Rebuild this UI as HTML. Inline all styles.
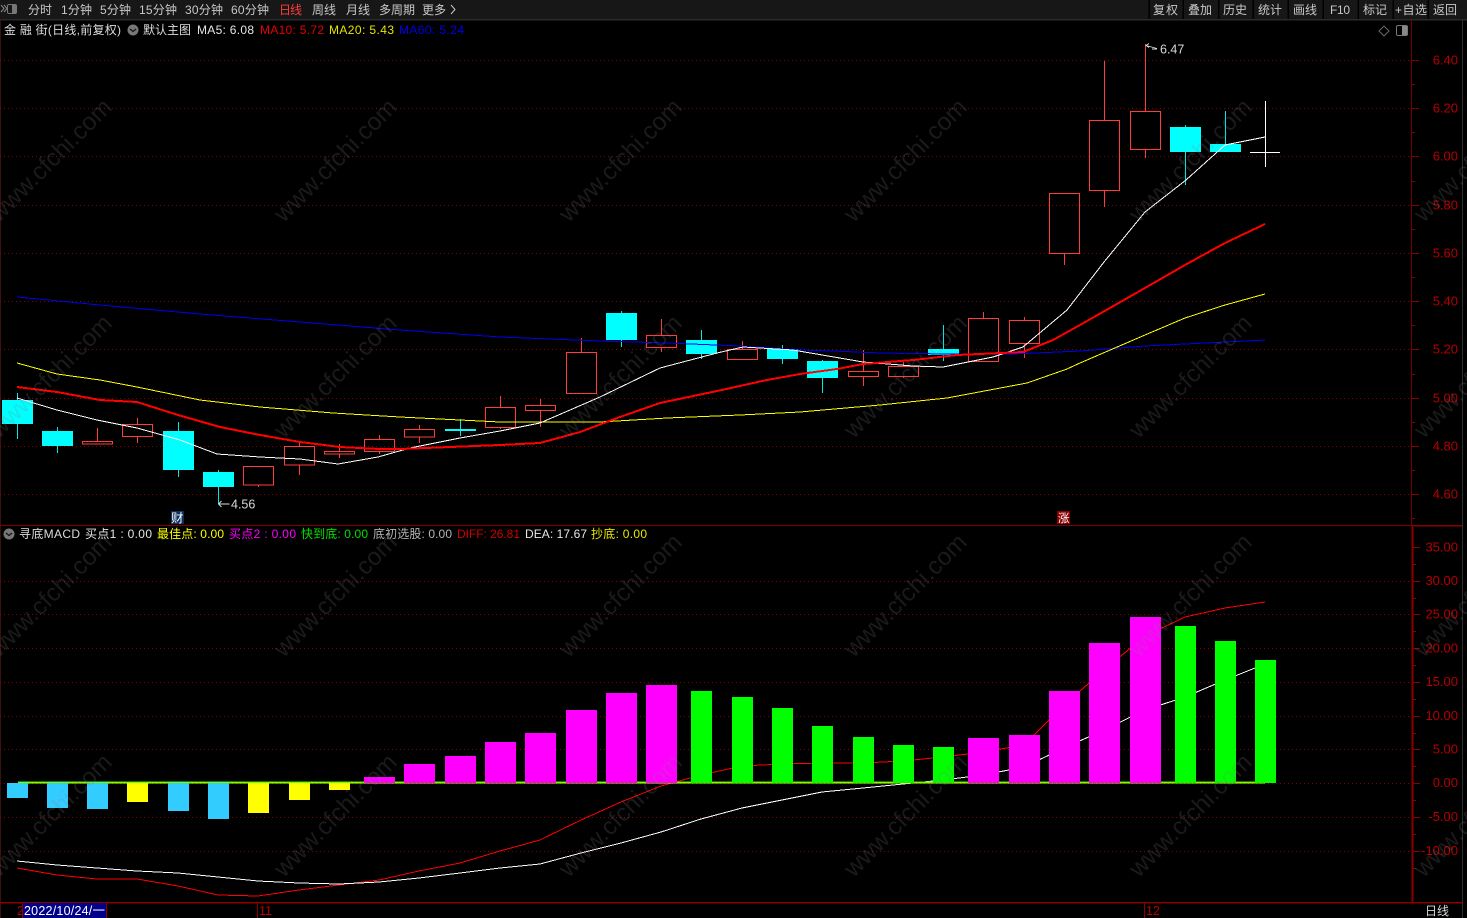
<!DOCTYPE html>
<html lang="zh"><head><meta charset="utf-8"><title>金融街 日线</title>
<style>
html,body{margin:0;padding:0;background:#000;width:1467px;height:918px;overflow:hidden}
svg{display:block;font-family:"Liberation Sans","Noto Sans CJK SC",sans-serif}
.c rect,.c line,polyline,.g line,.cr{shape-rendering:crispEdges}
.tb text{font-size:12px;fill:#c8c8c8}
.h text{font-size:12px}
.ax text{font-size:13px;fill:#b40000;text-anchor:end}
.wm text{font-size:24.5px;fill:#808080;opacity:.2;text-anchor:middle}
</style></head><body>
<svg width="1467" height="918" viewBox="0 0 1467 918" xmlns="http://www.w3.org/2000/svg">
<rect width="1467" height="918" fill="#000"/>
<!-- toolbar -->
<rect width="1467" height="19" fill="#171717"/>
<rect x="0" y="19" width="1467" height="1.5" fill="#2a2a2a"/>
<path d="M1 5l3 3.5-3 3.5M4 5l3 3.5-3 3.5" fill="none" stroke="#888" stroke-width="1"/>
<rect x="7.5" y="4.5" width="9" height="9" rx="1.5" fill="none" stroke="#777"/><rect x="12" y="5" width="4" height="8" fill="#777"/>
<g class="tb">
<text x="28" y="14" textLength="24">分时</text>
<text x="61" y="14" textLength="31">1分钟</text>
<text x="100" y="14" textLength="31">5分钟</text>
<text x="139" y="14" textLength="38">15分钟</text>
<text x="185" y="14" textLength="38">30分钟</text>
<text x="231" y="14" textLength="38">60分钟</text>
<text x="279" y="14" textLength="23" style="fill:#ff3c3c">日线</text>
<text x="312" y="14" textLength="24">周线</text>
<text x="346" y="14" textLength="24">月线</text>
<text x="379" y="14" textLength="36">多周期</text>
<text x="422" y="14" textLength="24">更多</text>
<path d="M451 5l4 4.5-4 4.5" fill="none" stroke="#c8c8c8"/>
<text x="1153" y="14" textLength="25">复权</text>
<text x="1188" y="14" textLength="24">叠加</text>
<text x="1223" y="14" textLength="24">历史</text>
<text x="1258" y="14" textLength="24">统计</text>
<text x="1293" y="14" textLength="24">画线</text>
<text x="1330" y="14" textLength="20">F10</text>
<text x="1363" y="14" textLength="24">标记</text>
<text x="1395" y="14" textLength="32">+自选</text>
<text x="1433" y="14" textLength="24">返回</text>
</g>
<g class="g" stroke="#000" stroke-width="1.5"><line x1="1149" y1="0" x2="1149" y2="19"/><line x1="1183" y1="0" x2="1183" y2="19"/><line x1="1218.5" y1="0" x2="1218.5" y2="19"/><line x1="1253" y1="0" x2="1253" y2="19"/><line x1="1288" y1="0" x2="1288" y2="19"/><line x1="1323" y1="0" x2="1323" y2="19"/><line x1="1358" y1="0" x2="1358" y2="19"/><line x1="1393" y1="0" x2="1393" y2="19"/><line x1="1428" y1="0" x2="1428" y2="19"/></g>
<!-- frame -->
<g class="g">
<line x1="0.5" y1="20" x2="0.5" y2="918" stroke="#3a1010"/>
<line x1="1411.5" y1="20" x2="1411.5" y2="525" stroke="#700000"/>
<line x1="0" y1="525.5" x2="1412" y2="525.5" stroke="#800000"/>
<line x1="1462.5" y1="20" x2="1462.5" y2="918" stroke="#2e2e2e"/>
</g>
<rect class="cr" x="1412" y="525" width="50" height="1.6" fill="#8a0000"/>
<rect class="cr" x="1411.5" y="525" width="2" height="377" fill="#8a0000"/>
<rect class="cr" x="0" y="902" width="1462" height="1.4" fill="#8a0000"/>
<!-- dotted grids -->
<g stroke="#8c0000" stroke-dasharray="1 3" stroke-width="1">
<path d="M0 60.5H1411M0 108.5H1411M0 156.5H1411M0 205.5H1411M0 253.5H1411M0 301.5H1411M0 349.5H1411M0 398.5H1411M0 446.5H1411M0 494.5H1411" fill="none"/>
<path d="M0 581.5H1411M0 614.5H1411M0 648.5H1411M0 682.5H1411M0 716.5H1411M0 749.5H1411M0 783.5H1411M0 817.5H1411M0 851.5H1411" fill="none"/>
</g>
<!-- axis ticks -->
<path class="cr" stroke="#8a0000" fill="none" d="M1412 60.5h7M1412 84.5h3M1412 108.5h7M1412 132.5h3M1412 156.5h7M1412 181.5h3M1412 205.5h7M1412 229.5h3M1412 253.5h7M1412 277.5h3M1412 301.5h7M1412 325.5h3M1412 349.5h7M1412 374.5h3M1412 398.5h7M1412 422.5h3M1412 446.5h7M1412 470.5h3M1412 494.5h7M1412 518.5h3M1413 547.5h7M1413 564.5h3M1413 581.5h7M1413 598.5h3M1413 614.5h7M1413 631.5h3M1413 648.5h7M1413 665.5h3M1413 682.5h7M1413 699.5h3M1413 716.5h7M1413 733.5h3M1413 749.5h7M1413 766.5h3M1413 783.5h7M1413 800.5h3M1413 817.5h7M1413 834.5h3M1413 851.5h7M1413 868.5h3"/>
<g class="ax">
<text x="1458" y="64.5">6.40</text><text x="1458" y="112.5">6.20</text><text x="1458" y="160.5">6.00</text><text x="1458" y="209.5">5.80</text><text x="1458" y="257.5">5.60</text><text x="1458" y="305.5">5.40</text><text x="1458" y="353.5">5.20</text><text x="1458" y="402.5">5.00</text><text x="1458" y="450.5">4.80</text><text x="1458" y="498.5">4.60</text>
<text x="1458" y="551.5">35.00</text><text x="1458" y="585">30.00</text><text x="1458" y="618.5">25.00</text><text x="1458" y="652.5">20.00</text><text x="1458" y="686">15.00</text><text x="1458" y="720">10.00</text><text x="1458" y="753.5">5.00</text><text x="1458" y="787">0.00</text><text x="1458" y="821">-5.00</text><text x="1458" y="855">-10.00</text>
</g>
<!-- candles -->
<g class="c">
<g stroke="#ff3c3c" fill="none">
<path class="cr" d="M97.5 428V441M137.5 418V424M137.5 436V443M258.5 485V487M299.5 441V446M299.5 465V475M339.5 444V451M339.5 454V458M379.5 435V439M379.5 451V454M419.5 425V429M419.5 437V443M500.5 396V407M500.5 427V429M540.5 399V405M540.5 411V427M581.5 338V352M661.5 319V335M661.5 347V352M742.5 341V349M863.5 350V371M863.5 376V386M903.5 362V366M903.5 376V378M983.5 312V318M1024.5 317V320M1024.5 343V358M1064.5 253V265M1104.5 61V121M1104.5 190V207M1145.5 44V111M1145.5 150V158" shape-rendering="crispEdges"/>
<rect x="82.5" y="441.5" width="30" height="2.5"/><rect x="122.5" y="424.5" width="30" height="12"/><rect x="243.5" y="466.5" width="30" height="18.5"/><rect x="284.5" y="446.5" width="30" height="18.5"/><rect x="324.5" y="451.5" width="30" height="2.5"/><rect x="364.5" y="439.5" width="30" height="12"/><rect x="404.5" y="429.5" width="30" height="7.5"/><rect x="485.5" y="407.5" width="30" height="20"/><rect x="525.5" y="405.5" width="30" height="5"/><rect x="566.5" y="352.5" width="30" height="41"/><rect x="646.5" y="335.5" width="30" height="12"/><rect x="727.5" y="349.5" width="30" height="10"/><rect x="848.5" y="371.5" width="30" height="5"/><rect x="888.5" y="366.5" width="30" height="10"/><rect x="968.5" y="318.5" width="30" height="43"/><rect x="1009.5" y="320.5" width="30" height="23"/><rect x="1049.5" y="193.5" width="30" height="60"/><rect x="1089.5" y="120.5" width="30" height="70"/><rect x="1130.5" y="111.5" width="30" height="38"/>
</g>
<path stroke="#00e8e8" fill="none" shape-rendering="crispEdges" d="M17.5 393V439M57.5 427V453M178.5 422V477M218.5 470V504M460.5 419V436M621.5 311V347M701.5 330V359M782.5 345V364M822.5 360V393M943.5 325V361M1185.5 125V185M1225.5 111V152"/>
<g fill="#00ffff">
<rect x="2" y="400" width="31" height="24"/><rect x="42" y="431" width="31" height="15"/><rect x="163" y="431" width="31" height="39"/><rect x="203" y="472" width="31" height="15"/><rect x="445" y="429" width="31" height="2"/><rect x="606" y="313" width="31" height="27"/><rect x="686" y="340" width="31" height="14"/><rect x="767" y="349" width="31" height="10"/><rect x="807" y="361" width="31" height="17"/><rect x="928" y="349" width="31" height="6"/><rect x="1170" y="127" width="31" height="25"/><rect x="1210" y="144" width="31" height="8"/>
</g>
<path shape-rendering="crispEdges" stroke="#fff" fill="none" d="M1265.5 101V167M1250 152.5H1280"/>
</g>
<!-- MA lines -->
<polyline fill="none" stroke="#0000f0" stroke-width="1" points="17,297 100,305 200,314 300,322 400,330 500,337 600,341 667,343 740,346 800,350 833,351 880,353 947,354 1013,354 1080,351 1145,346 1265,340"/>
<polyline fill="none" stroke="#ffff00" stroke-width="1" points="17,363 57,374 100,380 137,387 200,400 260,407 333,413 400,417 500,422 600,422 667,418 740,415 800,412 880,405 947,398 1027,383 1067,369 1080,363 1145,335 1185,318 1225,305 1265,294"/>
<polyline fill="none" stroke="#ffffff" stroke-width="1" points="17,398 57,410 97,420 137,428 180,440 217,454 260,457 300,459 338,464 378,457 410,448 460,438 500,431 540,423 600,397 660,368 717,353 743,347 793,350 863,362 913,366 943,367 993,357 1023,347 1067,310 1104,262 1145,212 1186,180 1225,145 1265,137"/>
<polyline fill="none" stroke="#ff0000" stroke-width="2" points="17,387 57,392 100,400 137,402 178,415 220,427 260,435 300,442 340,447 380,449 400,449 500,445 540,443 580,432 620,417 660,403 717,391 767,380 800,374 837,369 863,364 913,360 957,355 1023,352 1053,340 1080,325 1145,288 1185,265 1225,243 1265,224"/>
<!-- extreme markers -->
<path d="M1152 49l5 0M1157 48.5L1146 45.5l3-2M1146 45.5l3 2" fill="none" stroke="#ddd" stroke-width=".9"/>
<text x="1160" y="53.5" font-size="12.5" fill="#d8d8d8">6.47</text>
<path d="M218.5 504h11M218.5 504l3-3M218.5 504l3 3" fill="none" stroke="#ddd" stroke-width=".9"/>
<text x="231" y="508.5" font-size="12.5" fill="#d8d8d8">4.56</text>
<rect x="171" y="511" width="13" height="13" fill="#0c2f5c"/>
<text x="171" y="522.5" font-size="12.5" fill="#fff">财</text>
<rect x="1057" y="511" width="13" height="13" fill="#8a0000"/>
<text x="1058" y="522" font-size="11.5" fill="#fff">涨</text>
<!-- MACD lines -->
<polyline fill="none" stroke="#ff0000" stroke-width="1" points="17,868 57,875 97,879 137,879 178,886 218,895 258,896 299,890 339,885 379,880 419,871 460,863 500,851 540,840 581,820 621,802 661,786 701,775 742,766 782,764 822,763 863,763 903,761 943,757 983,752 1024,745 1064,705 1104,670 1145,636 1185,617 1225,608 1265,602"/>
<polyline fill="none" stroke="#ffffff" stroke-width="1" points="17,861 57,865 97,868 137,871 178,873 218,877 258,881 299,883 339,884 379,882 419,878 460,873 500,868 540,864 581,853 621,843 661,832 701,819 742,808 782,800 822,792 863,788 903,784 943,780 983,775 1024,767 1064,748 1104,730 1145,710 1185,697 1225,680 1265,664"/>
<rect class="cr" x="18" y="781.5" width="1247" height="1" fill="#22ff00"/>
<rect class="cr" x="18" y="782.5" width="1247" height="1" fill="#c8ff00"/>
<!-- MACD bars -->
<g class="c">
<g fill="#33ccff"><rect x="7" y="783" width="21" height="15"/><rect x="47" y="783" width="21" height="25"/><rect x="87" y="783" width="21" height="26"/><rect x="168" y="783" width="21" height="28"/><rect x="208" y="783" width="21" height="36"/></g>
<g fill="#ffff00"><rect x="127" y="783" width="21" height="19"/><rect x="248" y="783" width="21" height="30"/><rect x="289" y="783" width="21" height="17"/><rect x="329" y="783" width="21" height="7"/></g>
<g fill="#ff00ff"><rect x="364" y="777" width="31" height="6"/><rect x="404" y="764" width="31" height="19"/><rect x="445" y="756" width="31" height="27"/><rect x="485" y="742" width="31" height="41"/><rect x="525" y="733" width="31" height="50"/><rect x="566" y="710" width="31" height="73"/><rect x="606" y="693" width="31" height="90"/><rect x="646" y="685" width="31" height="98"/><rect x="968" y="738" width="31" height="45"/><rect x="1009" y="735" width="31" height="48"/><rect x="1049" y="691" width="31" height="92"/><rect x="1089" y="643" width="31" height="140"/><rect x="1130" y="617" width="31" height="166"/></g>
<g fill="#00ff00"><rect x="691" y="691" width="21" height="92"/><rect x="732" y="697" width="21" height="86"/><rect x="772" y="708" width="21" height="75"/><rect x="812" y="726" width="21" height="57"/><rect x="853" y="737" width="21" height="46"/><rect x="893" y="745" width="21" height="38"/><rect x="933" y="747" width="21" height="36"/><rect x="1175" y="626" width="21" height="157"/><rect x="1215" y="641" width="21" height="142"/><rect x="1255" y="660" width="21" height="123"/></g>
</g>
<!-- watermark -->
<g class="wm">
<text transform="translate(56,166) rotate(-45)">www.cfchi.com</text><text transform="translate(341,166) rotate(-45)">www.cfchi.com</text><text transform="translate(626,166) rotate(-45)">www.cfchi.com</text><text transform="translate(911,166) rotate(-45)">www.cfchi.com</text><text transform="translate(1196,166) rotate(-45)">www.cfchi.com</text><text transform="translate(1481,166) rotate(-45)">www.cfchi.com</text>
<text transform="translate(56,382) rotate(-45)">www.cfchi.com</text><text transform="translate(341,382) rotate(-45)">www.cfchi.com</text><text transform="translate(626,382) rotate(-45)">www.cfchi.com</text><text transform="translate(911,382) rotate(-45)">www.cfchi.com</text><text transform="translate(1196,382) rotate(-45)">www.cfchi.com</text><text transform="translate(1481,382) rotate(-45)">www.cfchi.com</text>
<text transform="translate(56,601) rotate(-45)">www.cfchi.com</text><text transform="translate(341,601) rotate(-45)">www.cfchi.com</text><text transform="translate(626,601) rotate(-45)">www.cfchi.com</text><text transform="translate(911,601) rotate(-45)">www.cfchi.com</text><text transform="translate(1196,601) rotate(-45)">www.cfchi.com</text><text transform="translate(1481,601) rotate(-45)">www.cfchi.com</text>
<text transform="translate(56,821) rotate(-45)">www.cfchi.com</text><text transform="translate(341,821) rotate(-45)">www.cfchi.com</text><text transform="translate(626,821) rotate(-45)">www.cfchi.com</text><text transform="translate(911,821) rotate(-45)">www.cfchi.com</text><text transform="translate(1196,821) rotate(-45)">www.cfchi.com</text><text transform="translate(1481,821) rotate(-45)">www.cfchi.com</text>
</g>
<!-- header 1 -->
<g class="h">
<text x="4" y="34" textLength="117" fill="#dcdcdc">金 融 街(日线,前复权)</text>
<circle cx="133" cy="30" r="5.5" fill="#777"/><path d="M130 29l3 2.5 3-2.5" fill="none" stroke="#111" stroke-width="1.2"/>
<text x="143" y="34" textLength="48" fill="#dcdcdc">默认主图</text>
<text x="197" y="34" textLength="57" fill="#e6e6e6">MA5: 6.08</text>
<text x="260" y="34" textLength="64" fill="#e60000">MA10: 5.72</text>
<text x="329" y="34" textLength="65" fill="#e6e600">MA20: 5.43</text>
<text x="399" y="34" textLength="65" fill="#0000e6">MA60: 5.24</text>
</g>
<path d="M1384 26l5 5-5 5-5-5z" fill="none" stroke="#666"/>
<rect x="1396.5" y="25.5" width="11" height="10" rx="1.5" fill="none" stroke="#777"/><rect x="1402" y="26" width="5" height="9" fill="#888"/>
<!-- header 2 -->
<g class="h">
<circle cx="9" cy="534" r="5.5" fill="#777"/><path d="M6 533l3 2.5 3-2.5" fill="none" stroke="#111" stroke-width="1.2"/>
<text x="19" y="538" textLength="61" fill="#dcdcdc">寻底MACD</text>
<text x="85" y="538" textLength="67" fill="#e6e6e6">买点1 : 0.00</text>
<text x="157" y="538" textLength="67" fill="#ffff00">最佳点: 0.00</text>
<text x="229" y="538" textLength="67" fill="#ff00ff">买点2 : 0.00</text>
<text x="301" y="538" textLength="67" fill="#00e000">快到底: 0.00</text>
<text x="373" y="538" textLength="79" fill="#b4b4b4">底初选股: 0.00</text>
<text x="457" y="538" textLength="63" fill="#d00000">DIFF: 26.81</text>
<text x="525" y="538" textLength="62" fill="#e6e6e6">DEA: 17.67</text>
<text x="591" y="538" textLength="56" fill="#e6e600">抄底: 0.00</text>
</g>
<!-- time axis -->
<text x="17" y="915" font-size="12.5" fill="#b80000">2</text>
<rect class="cr" x="23" y="903" width="83" height="15" fill="#000088"/>
<path class="cr" d="M22.5 903V918M106.5 903V918M257.5 903V918M1144.5 903V918" stroke="#8a0000" fill="none"/>
<text x="24" y="915" font-size="12.5" fill="#fff" textLength="81">2022/10/24/一</text>
<text x="259" y="915" font-size="12.5" fill="#b80000">11</text>
<text x="1146" y="915" font-size="12.5" fill="#b80000">12</text>
<text x="1425" y="915" font-size="12" fill="#d8d8d8" textLength="24">日线</text>
</svg>
</body></html>
